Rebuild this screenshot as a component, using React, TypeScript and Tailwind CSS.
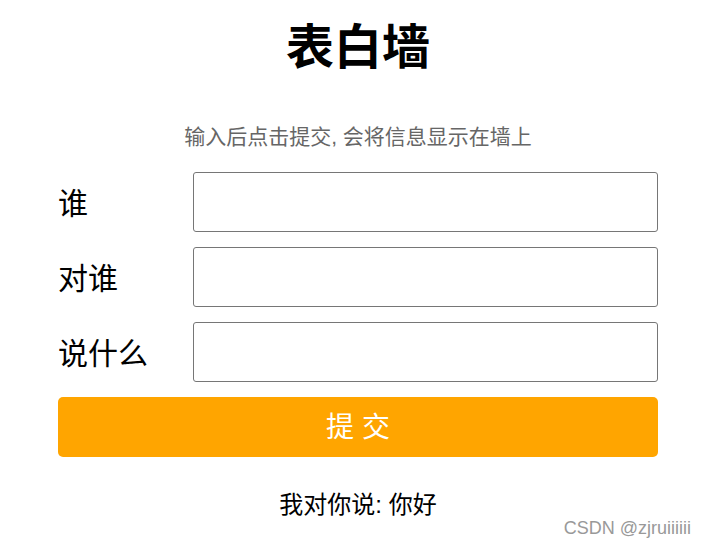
const FIELDS = ["谁", "对谁", "说什么"];

export default function App() {
  return (
    <div
      className="relative h-[550px] w-[706px] bg-white text-black"
      style={{ fontFamily: '"Liberation Sans", "Noto Sans CJK SC", sans-serif' }}
    >
      <div className="ml-[58px] flex w-[600px] flex-col">
        <h1 className="mt-[19px] text-center text-[48px] font-bold leading-[58px]">表白墙</h1>
        <p className="mt-[47px] text-center text-[21px] leading-[25px] text-[#666666]">
          输入后点击提交, 会将信息显示在墙上
        </p>
        <div className="mt-[23px] flex flex-col gap-[15px]">
          {FIELDS.map((label) => (
            <div key={label} className="flex h-[60px] items-center">
              <span className="w-[135px] pt-[3px] text-[30px] leading-none">{label}</span>
              <input
                type="text"
                className="h-[60px] flex-1 rounded-[3px] border border-[#767676] bg-white px-2 text-[20px] outline-none"
              />
            </div>
          ))}
        </div>
        <button className="mt-[15px] h-[60px] w-full rounded-[5px] bg-[#ffa500] pt-[2px] text-[28px] text-white">
          提 交
        </button>
        <div className="mt-[33px] text-center text-[24px] leading-[30px]">我对你说: 你好</div>
      </div>
      <span className="absolute bottom-[8px] right-[15px] text-[18px] text-[#999999]">CSDN @zjruiiiiii</span>
    </div>
  );
}
